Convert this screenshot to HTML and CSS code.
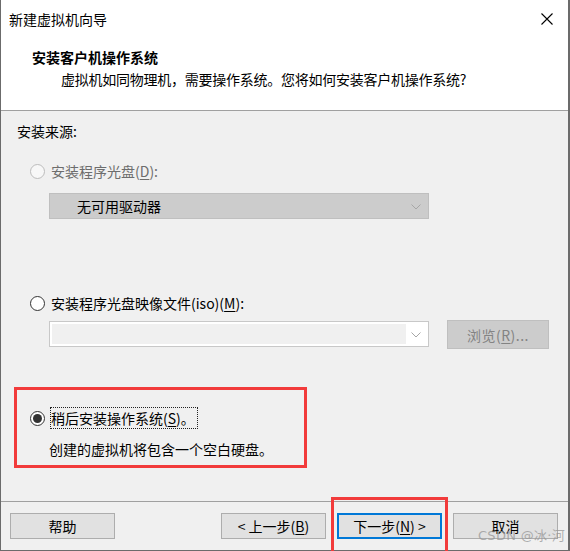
FILE: index.html
```html
<!DOCTYPE html>
<html lang="zh-CN">
<head>
<meta charset="utf-8">
<title>新建虚拟机向导</title>
<link rel="stylesheet" href="styles.css">
</head>
<body>
<div class="window">
  <div class="header">
    <div class="titlebar">
      <span class="title">新建虚拟机向导</span>
      <svg class="close" width="12" height="12" viewBox="0 0 12 12"><path d="M0.5 0.5 L11.5 11.5 M11.5 0.5 L0.5 11.5" stroke="#000" stroke-width="1.1" fill="none"/></svg>
    </div>
    <div class="heading">安装客户机操作系统</div>
    <div class="subtitle">虚拟机如同物理机，需要操作系统。您将如何安装客户机操作系统?</div>
  </div>

  <div class="content">
    <div class="section-label">安装来源:</div>

    <div class="option disabled">
      <span class="radio"></span>
      <span class="option-text">安装程序光盘(<u>D</u>):</span>
    </div>
    <div class="combo combo-disabled">
      <span class="combo-text">无可用驱动器</span>
      <svg class="chev" width="10" height="6" viewBox="0 0 10 6"><path d="M0.5 0.5 L5 5 L9.5 0.5" stroke="#a6a6a6" fill="none"/></svg>
    </div>

    <div class="option option-iso">
      <span class="radio"></span>
      <span class="option-text">安装程序光盘映像文件(iso)(<u>M</u>):</span>
    </div>
    <div class="iso-row">
      <div class="combo combo-input">
        <span class="combo-field"></span>
        <svg class="chev" width="10" height="6" viewBox="0 0 10 6"><path d="M0.5 0.5 L5 5 L9.5 0.5" stroke="#a6a6a6" fill="none"/></svg>
      </div>
      <div class="btn-browse">浏览(<u>R</u>)...</div>
    </div>

    <div class="later-box">
      <div class="option">
        <span class="radio checked"></span>
        <span class="option-text focus">稍后安装操作系统(<u>S</u>)。</span>
      </div>
      <div class="later-desc">创建的虚拟机将包含一个空白硬盘。</div>
    </div>
  </div>

  <div class="footer">
    <div class="btn">帮助</div>
    <div class="footer-right">
      <div class="btn">&lt; 上一步(<u>B</u>)</div>
      <div class="btn-wrap">
        <div class="btn btn-default">下一步(<u>N</u>) &gt;</div>
        <span class="mark"></span>
      </div>
      <div class="btn">取消</div>
    </div>
    <span class="watermark">CSDN @冰·河</span>
  </div>
</div>
</body>
</html>
```

FILE: styles.css
```css
* { box-sizing: border-box; }
html, body { margin: 0; padding: 0; }
body {
  width: 570px;
  height: 551px;
  overflow: hidden;
  font-family: "Noto Sans CJK SC", "Noto Sans", sans-serif;
  font-size: 14px;
  color: #000;
  background: #ffffff;
}
u { text-decoration: underline; text-underline-offset: 2px; }

.window {
  width: 570px;
  height: 551px;
  display: flex;
  flex-direction: column;
  background: #f0f0f0;
  border-left: 1px solid #6b6b6b;
  border-right: 2px solid #6b6b6b;
  border-bottom: 1px solid #6b6b6b;
}

.header {
  height: 111px;
  background: #ffffff;
  border-bottom: 1px solid #a0a0a0;
  flex: none;
}
.titlebar {
  height: 40px;
  display: flex;
  align-items: center;
  justify-content: space-between;
  padding: 0 15px 2px 8px;
  line-height: 20px;
}
.close { display: block; margin-top: -1px; }
.heading {
  margin-top: 7px;
  padding-left: 31px;
  font-weight: bold;
  line-height: 20px;
}
.subtitle {
  margin-top: 2px;
  padding-left: 60px;
  line-height: 20px;
  letter-spacing: -0.25px;
}

.content {
  flex: none;
  line-height: 20px;
}
.section-label {
  margin: 10px 0 0 16px;
}
.option {
  display: flex;
  align-items: center;
  gap: 6px;
  margin: 20px 0 0 29px;
  height: 20px;
}
.option.option-iso { margin-top: 74px; }
.disabled .option-text { color: #6d6d6d; }
.radio {
  width: 15px;
  height: 15px;
  border-radius: 50%;
  border: 1px solid #333333;
  background: #ffffff;
  display: flex;
  align-items: center;
  justify-content: center;
  flex: none;
}
.disabled .radio {
  border-color: #bcbcbc;
  background: #f7f7f7;
}
.radio.checked::after {
  content: "";
  width: 9px;
  height: 9px;
  border-radius: 50%;
  background: #333333;
}

.combo {
  position: relative;
  width: 380px;
  height: 26px;
  margin: 12px 0 0 48px;
  display: flex;
  align-items: center;
}
.combo-disabled {
  background: #cccccc;
  border: 1px solid #bfbfbf;
}
.combo-text { padding-left: 27px; }
.chev { position: absolute; right: 7px; top: 10px; }

.iso-row {
  display: flex;
  align-items: flex-start;
  margin: 7px 0 0 48px;
  gap: 18px;
}
.combo-input {
  margin: 1px 0 0 0;
  background: #ffffff;
  border: 1px solid #c8c8c8;
  padding: 2px;
}
.combo-field {
  display: block;
  width: 354px;
  height: 100%;
  background: #f0f0f0;
}
.btn-browse {
  width: 102px;
  height: 29px;
  background: #cccccc;
  border: 1px solid #bfbfbf;
  color: #838383;
  display: flex;
  align-items: center;
  justify-content: center;
  letter-spacing: 0.5px;
}

.later-box {
  width: 293px;
  height: 81px;
  margin: 38px 0 0 13px;
  border: 3px solid #f23b3b;
  padding: 18px 0 0 13px;
}
.later-box .option { margin: 0; }
.focus {
  outline: 1px dotted #222;
  outline-offset: 0;
  padding-right: 2px;
}
.later-desc {
  margin: 11px 0 0 19px;
}

.footer {
  position: relative;
  margin-top: auto;
  height: 49px;
  border-top: 1px solid #a0a0a0;
  display: flex;
  justify-content: space-between;
  padding: 11px 10px 0 9px;
}
.footer-right {
  display: flex;
  gap: 11px;
}
.btn {
  width: 105px;
  height: 26px;
  background: #e1e1e1;
  border: 1px solid #adadad;
  display: flex;
  align-items: center;
  justify-content: center;
  line-height: 20px;
}
.btn-wrap { position: relative; }
.btn-default {
  border: 2px solid #0078d7;
}
.mark {
  position: absolute;
  left: -6px;
  right: -6px;
  top: -16px;
  bottom: -5px;
  border: 3px solid #f23b3b;
  pointer-events: none;
}
.watermark {
  position: absolute;
  right: 3px;
  bottom: 6px;
  font-family: "DejaVu Sans", "Noto Sans CJK SC", sans-serif;
  font-size: 13px;
  color: rgba(150, 150, 150, 0.75);
  letter-spacing: 0.3px;
}
```
